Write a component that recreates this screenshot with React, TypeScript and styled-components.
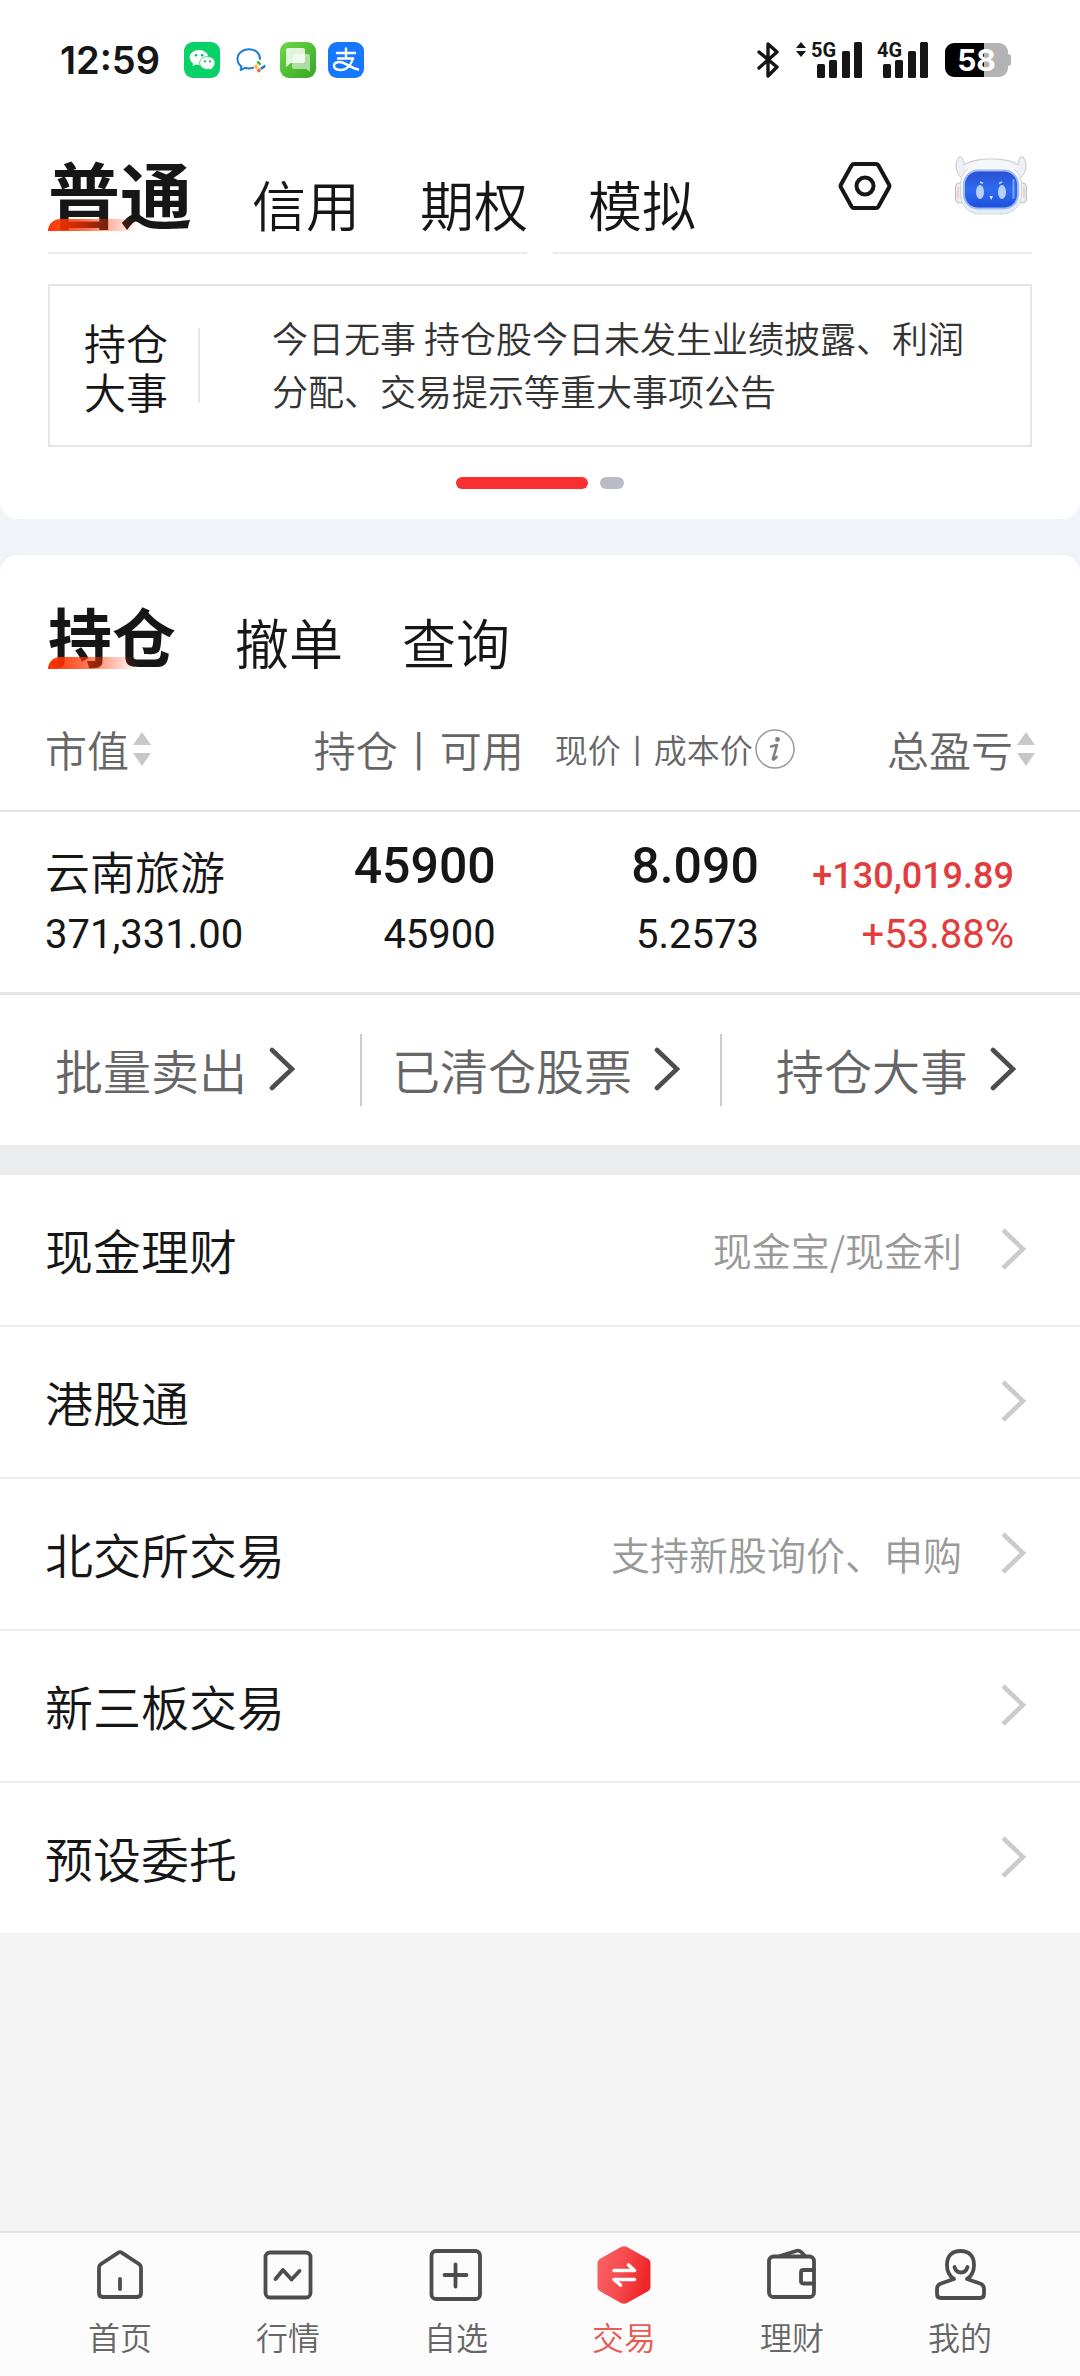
import React from "react";
import styled, { createGlobalStyle, css } from "styled-components";

const GlobalStyle = createGlobalStyle`
  *, *::before, *::after { box-sizing: border-box; }
  html, body { margin: 0; padding: 0; }
  body {
    background: #f4f4f4;
    color: #161616;
    font-family: "Noto Sans CJK SC", "Noto Sans", sans-serif;
    font-weight: 350;
  }
  button {
    margin: 0;
    padding: 0;
    border: 0;
    background: none;
    color: inherit;
    font: inherit;
    cursor: pointer;
  }
  a { color: inherit; text-decoration: none; }
  svg { display: block; flex: none; }
`;

const Page = styled.div`
  display: flex;
  flex-direction: column;
  min-height: 100vh;
`;

/* ---------- status bar ---------- */

const StatusBar = styled.div`
  display: flex;
  align-items: center;
  justify-content: space-between;
  height: 120px;
  padding: 0 72px 0 60px;
`;

const StatusGroup = styled.div<{ $gap: number }>`
  display: flex;
  align-items: center;
  gap: ${(p) => p.$gap}px;
`;

const Clock = styled.time`
  margin-right: 12px;
  font: 600 38px/36px Inter, sans-serif;
`;

const Battery = styled.div`
  position: relative;
  width: 63px;
  height: 34px;
  border-radius: 9px;
  background: linear-gradient(90deg, #000 62%, #b3b3b3 62%);
  color: #fff;
  font: 700 30px/34px Inter, sans-serif;
  text-align: center;

  &::after {
    content: "";
    position: absolute;
    top: 11px;
    right: -3px;
    width: 3px;
    height: 12px;
    border-radius: 0 3px 3px 0;
    background: #b3b3b3;
  }
`;

/* ---------- cards and tabs ---------- */

const Backdrop = styled.main`
  display: flex;
  flex-direction: column;
  gap: 36px;
  background: #f2f3f8;
`;

const TopCard = styled.section`
  padding-bottom: 30px;
  border-radius: 0 0 18px 18px;
  background: #fff;
`;

const HoldingsCard = styled.section`
  border-radius: 18px 18px 0 0;
  background: #fff;
`;

const TabBar = styled.div`
  display: flex;
  align-items: flex-end;
  padding: 0 48px;
`;

const AccountBar = styled(TabBar)`
  gap: 60px;
  height: 111px;
`;

const SectionBar = styled(TabBar)`
  gap: 59px;
  height: 114px;
`;

const Tab = styled.button<{ $size?: number }>`
  position: relative;
  font-size: 54px;
  line-height: 54px;
  white-space: nowrap;

  ${(p) =>
    p.$size &&
    css`
      font-size: ${p.$size}px;
      line-height: ${p.$size + 6}px;
      font-weight: 700;

      &::after {
        content: "";
        position: absolute;
        left: 0;
        bottom: 0;
        width: 90px;
        height: 12px;
        border-radius: 12px 0 0 0;
        background: linear-gradient(90deg, #ff3300, rgba(255, 51, 0, 0.7) 40%, rgba(255, 51, 0, 0));
      }
    `}
`;

const HeaderActions = styled.div`
  display: flex;
  align-items: center;
  gap: 62px;
  height: 111px;
  padding: 20px 4px 0 0;
  margin-left: auto;
`;

const TabRule = styled.div`
  display: grid;
  grid-template-columns: 1fr 1fr;
  gap: 26px;
  height: 2px;
  margin: 21px 48px 30px;

  i { background: #ebebeb; }
`;

/* ---------- notice ---------- */

const Notice = styled.article`
  display: flex;
  align-items: center;
  height: 163px;
  margin: 0 48px;
  padding: 0 40px 0 34px;
  border: 2px solid #e5e6e8;
`;

const NoticeTitle = styled.h2`
  width: 84px;
  margin: 0;
  font-size: 42px;
  font-weight: inherit;
  line-height: 49px;
`;

const NoticeRule = styled.div`
  flex: none;
  width: 2px;
  height: 75px;
  margin: 0 72px 0 30px;
  background: #e5e6e8;
`;

const NoticeText = styled.p`
  flex: 1;
  margin: 0;
  padding-bottom: 4px;
  color: #333;
  font-size: 36px;
  line-height: 53px;
`;

const Pager = styled.div`
  display: flex;
  justify-content: center;
  gap: 12px;
  margin-top: 30px;
`;

const PagerDot = styled.span<{ $active?: boolean }>`
  width: ${(p) => (p.$active ? 132 : 24)}px;
  height: 12px;
  border-radius: 6px;
  background: ${(p) => (p.$active ? "#f83030" : "#bbbbc6")};
`;

/* ---------- holdings table ---------- */

const Holdings = styled.table`
  width: 100%;
  border-collapse: collapse;
  table-layout: fixed;
  text-align: right;

  th:first-child, td:first-child { padding-left: 45px; text-align: left; }
  th:last-child { padding-right: 45px; }
`;

const Col = styled.col<{ $width: string }>`
  width: ${(p) => p.$width};
`;

const HeadCell = styled.th<{ $small?: boolean }>`
  height: 142px;
  padding: 18px 0 0;
  border-bottom: 2px solid #e3e4e8;
  color: #666;
  font-size: ${(p) => (p.$small ? 33 : 42)}px;
  font-weight: inherit;
  white-space: nowrap;
`;

const HeadLabel = styled.span`
  display: inline-flex;
  align-items: center;
  gap: 2px;
`;

const SortButton = styled.button`
  display: inline-flex;
  align-items: center;
  gap: 4px;
`;

const BodyCell = styled.td<{ $inset?: number }>`
  height: 182px;
  padding: 0 ${(p) => p.$inset ?? 0}px 27px 0;
  border-bottom: 3px solid #e3e4e8;
  vertical-align: bottom;
`;

const figureKinds = {
  name: css`
    font-size: 45px;
    line-height: 68px;
  `,
  large: css`
    font-family: Roboto, sans-serif;
    font-size: 50px;
    font-weight: 500;
    line-height: 78px;
  `,
  gain: css`
    font-family: Roboto, sans-serif;
    font-size: 36px;
    font-weight: 500;
    line-height: 58px;
  `,
  small: css`
    font-family: Roboto, sans-serif;
    font-size: 40px;
    font-weight: 400;
    line-height: 60px;
  `,
};

const Figure = styled.div<{ $kind: keyof typeof figureKinds; $red?: boolean }>`
  color: ${(p) => (p.$red ? "#e23c3c" : "inherit")};
  white-space: nowrap;
  ${(p) => figureKinds[p.$kind]}
`;

/* ---------- shortcuts ---------- */

const Shortcuts = styled.nav`
  display: grid;
  grid-template-columns: repeat(3, 1fr);
  height: 150px;
  align-items: center;
`;

const Shortcut = styled.a`
  display: flex;
  align-items: center;
  justify-content: center;
  gap: 22px;
  height: 72px;
  padding: 0 10px 2px 0;
  color: #666;
  font-size: 48px;
  white-space: nowrap;

  & + & { border-left: 2px solid #ccc; }
`;

/* ---------- service list ---------- */

const Services = styled.ul`
  margin: 0;
  padding: 30px 0 0;
  background: #ebecee;
  list-style: none;
`;

const ServiceItem = styled.li`
  background: #fff;

  & + & { border-top: 2px solid #ebecee; }
`;

const Service = styled.a`
  display: flex;
  align-items: center;
  height: 150px;
  padding: 0 54px 2px 45px;
  font-size: 48px;
`;

const Hint = styled.span`
  margin: 0 38px 0 auto;
  color: #999;
  font-size: 39px;
`;

/* ---------- bottom navigation ---------- */

const BottomNav = styled.nav`
  display: grid;
  grid-template-columns: repeat(6, 1fr);
  height: 145px;
  margin-top: auto;
  padding: 12px 36px 0;
  border-top: 2px solid #e4e4e6;
  background: #fcfcfd;
`;

const NavItem = styled.a<{ $active?: boolean }>`
  display: flex;
  flex-direction: column;
  align-items: center;
  gap: 11px;
  color: ${(p) => (p.$active ? "#e9594f" : "#666")};
  font-size: 32px;
  line-height: 40px;
`;

/* ---------- icons ---------- */

const WeChatIcon = () => (
  <svg width="36" height="36" viewBox="0 0 36 36">
    <rect width="36" height="36" rx="9" fill="#07d167" />
    <path d="M15 8c-5.200 0-9.300 3.300-9.300 7.500 0 2.400 1.300 4.500 3.400 5.900L8.400 24l3.200-1.600c1 .3 2.200.5 3.400.5 5.200 0 9.300-3.300 9.300-7.400S20.200 8 15 8z" fill="#fff" />
    <path d="M23.400 14.600c-4.300 0-7.700 2.800-7.700 6.400s3.400 6.400 7.700 6.400c1 0 1.900-.1 2.700-.4l2.700 1.300-.7-2.200c1.800-1.200 2.900-3 2.900-5.100 0-3.600-3.400-6.400-7.600-6.400z" fill="#fff" stroke="#07d167" strokeWidth=".8" />
    <g fill="#07c160">
      <circle cx="12" cy="13.200" r="1.300" /><circle cx="18.200" cy="13.200" r="1.300" />
      <circle cx="21" cy="19.400" r="1.100" /><circle cx="26" cy="19.400" r="1.100" />
    </g>
  </svg>
);

const WeComIcon = () => (
  <svg width="36" height="36" viewBox="0 0 36 36" fill="none">
    <path d="M28 17c0-6-5-9.800-11.200-9.800S5.500 11.600 5.500 17c0 3 1.500 5.600 3.900 7.400L8.600 28l4.400-2.200c2.500.8 5.500.8 8 0" stroke="#1f7fd0" strokeWidth="2" strokeLinecap="round" strokeLinejoin="round" />
    <path d="M26 18.500l3.500 3.500-2 1.500-3-3z" fill="#3fae3a" />
    <path d="M33 22.500l.5 2.500-4 3-1.500-2z" fill="#1b6fd0" />
    <path d="M29 29l-2.500 1.500-2-2 2.500-2.500z" fill="#f2622b" />
    <path d="M24.500 22l-2.500 2.500 2 3 2-2z" fill="#fbbc1c" />
  </svg>
);

const MessagesIcon = () => (
  <svg width="36" height="36" viewBox="0 0 36 36">
    <defs>
      <linearGradient id="msg" x1="0" y1="0" x2="1" y2="1">
        <stop offset="0" stopColor="#6fd844" /><stop offset="1" stopColor="#35a626" />
      </linearGradient>
    </defs>
    <rect width="36" height="36" rx="9" fill="url(#msg)" />
    <path d="M13 12h15a2 2 0 012 2v16l-4-3H14a2 2 0 01-2-2z" fill="#fff" opacity=".55" />
    <path d="M8 6h15a2 2 0 012 2v11a2 2 0 01-2 2H11l-5 4V8a2 2 0 012-2z" fill="#fff" opacity=".82" />
  </svg>
);

const AlipayIcon = () => (
  <svg width="36" height="36" viewBox="0 0 36 36" fill="none">
    <rect width="36" height="36" rx="9" fill="#1677ff" />
    <g stroke="#fff" strokeWidth="2.400" strokeLinecap="round">
      <path d="M9 11h18M18 6.500v10M10 16.500h15" />
      <path d="M25 16.500c-1.500 5-5.500 11.500-12.500 11.500-4 0-6.500-1.600-6.500-4.200S8.300 20 11.500 20c5.500 0 10 5.500 18.500 7.500" />
    </g>
  </svg>
);

const BluetoothIcon = () => (
  <svg width="22" height="36" viewBox="0 0 22 36" fill="none" stroke="#161616" strokeWidth="3.400" strokeLinecap="round" strokeLinejoin="round">
    <path d="M2 10l18 15-9 9V2l9 8L2 26" />
  </svg>
);

const SignalIcon = ({ label, arrows }: { label: string; arrows?: boolean }) => (
  <svg width={arrows ? 68 : 52} height="48" viewBox={arrows ? "-16 -6 68 48" : "0 -6 52 48"} fill="#161616">
    {arrows && <path d="M-15 6l5-6 5 6zM-15 9l5 6 5-6z" />}
    <text x="0" y="15" fontFamily="Roboto, sans-serif" fontWeight="700" fontSize="20">{label}</text>
    <rect x="6" y="22" width="8" height="14" rx="1.500" />
    <rect x="18" y="18" width="8" height="18" rx="1.500" />
    <rect x="31" y="9" width="8" height="27" rx="1.500" />
    <rect x="43" y="0" width="8" height="36" rx="1.500" />
  </svg>
);

const SettingsIcon = () => (
  <svg width="54" height="50" viewBox="0 0 54 50" fill="none" stroke="#161616" strokeWidth="4" strokeLinejoin="round">
    <path d="M16 3h22q1.500 0 2.300 1.300L51 23.500q.8 1.500 0 3L40.300 45.700Q39.500 47 38 47H16q-1.500 0-2.300-1.300L3 26.500q-.8-1.500 0-3L13.700 4.300Q14.500 3 16 3z" />
    <circle cx="27" cy="25" r="8.500" />
  </svg>
);

const RobotIcon = () => (
  <svg width="74" height="60" viewBox="0 0 74 60" fill="none">
    <defs>
      <linearGradient id="screen" x1="0" y1="0" x2="0" y2="1">
        <stop offset="0" stopColor="#2a4fd0" /><stop offset=".5" stopColor="#2f6bf0" /><stop offset="1" stopColor="#1c4fdc" />
      </linearGradient>
      <linearGradient id="shell" x1="0" y1="0" x2="0" y2="1">
        <stop offset="0" stopColor="#fbfcfd" /><stop offset="1" stopColor="#e4ebf5" />
      </linearGradient>
    </defs>
    <rect x="1.500" y="27" width="9" height="20" rx="4" fill="#f0ebee" stroke="#b9bcc4" />
    <rect x="63.500" y="27" width="9" height="20" rx="4" fill="#f0ebee" stroke="#b9bcc4" />
    <path d="M4 31v11M70 31v11" stroke="#e4b5b0" />
    <path d="M8 22C0 16 1 6 5 1c4-1 4 4 5 8 8-8 46-8 54 0 1-4 1-9 5-8 4 5 5 15-3 21z" fill="#edf0f5" stroke="#c3c7cf" />
    <rect x="6.500" y="9" width="61" height="49" rx="19" fill="url(#shell)" stroke="#d3d7df" />
    <path d="M12 10q25-13 50 0l-3 5H15z" fill="#f5f7f9" />
    <rect x="10" y="14.500" width="54" height="38" rx="14" fill="url(#screen)" stroke="#9fb9f5" strokeWidth="2" />
    <ellipse cx="26" cy="36" rx="4" ry="7" fill="#b4d0fb" />
    <ellipse cx="48" cy="36" rx="4" ry="7" fill="#b4d0fb" />
    <path d="M26 26l3 1.500M48 26l-3 1.500" stroke="#c4dcff" strokeWidth="1.500" />
    <path d="M35.500 40h3.500l-1.800 4z" fill="#e4f0ff" />
    <path d="M59.500 24v18" stroke="#7aa2f8" strokeWidth="2" strokeLinecap="round" />
  </svg>
);

const SortIcon = () => (
  <svg width="18" height="34" viewBox="0 0 18 34" fill="#c8c8c8">
    <path d="M9 0l9 13H0zM0 21h18L9 34z" />
  </svg>
);

const InfoIcon = () => (
  <svg width="40" height="40" viewBox="0 0 40 40" fill="none">
    <circle cx="20" cy="20" r="19" stroke="#999" strokeWidth="1.500" />
    <circle cx="22.500" cy="10.500" r="2.400" fill="#808080" />
    <path d="M16 17.500l6-1.500-4 13.500q-.3 1.500 1 .8l2.500-2.300" stroke="#808080" strokeWidth="2.600" strokeLinejoin="round" strokeLinecap="round" />
  </svg>
);

const Chevron = ({ color, cap }: { color: string; cap: "round" | "butt" }) => (
  <svg width="26" height="44" viewBox="0 0 26 44" fill="none" stroke={color} strokeWidth="4.600" strokeLinecap={cap}>
    <path d="M3 3l20 19L3 41" />
  </svg>
);

const NavIcon = ({ children }: { children: React.ReactNode }) => (
  <svg width="60" height="60" viewBox="0 0 60 60" fill="none" stroke="#4d4d4d" strokeWidth="3.800" strokeLinecap="round" strokeLinejoin="round">
    {children}
  </svg>
);

const HomeIcon = () => (
  <NavIcon>
    <path d="M28 7.800q2-1.400 4 0L49 19q2 1.500 2 4v25q0 4-4 4H13q-4 0-4-4V23q0-2.500 2-4z" />
    <path d="M30 34v10" />
  </NavIcon>
);

const MarketIcon = () => (
  <NavIcon>
    <rect x="7.500" y="7.500" width="45" height="45" rx="4.500" />
    <path d="M17.500 34l7.500-9 8.500 9.500 8-8.500" />
  </NavIcon>
);

const WatchIcon = () => (
  <NavIcon>
    <rect x="5.500" y="6" width="48.500" height="48" rx="4.500" />
    <path d="M18.500 30h22M29.500 19.500v22" />
  </NavIcon>
);

const TradeIcon = () => (
  <svg width="60" height="60" viewBox="0 0 60 60" fill="none">
    <defs>
      <linearGradient id="trade" x1="0" y1="0" x2="1" y2=".25">
        <stop offset="0" stopColor="#fb6266" /><stop offset=".5" stopColor="#f64d50" /><stop offset="1" stopColor="#ee2529" />
      </linearGradient>
    </defs>
    <path d="M27 2q3-1.600 6 0l20.500 11.500q3 1.700 3 5v23q0 3.300-3 5L33 58q-3 1.600-6 0L6.500 46.500q-3-1.700-3-5v-23q0-3.300 3-5z" fill="url(#trade)" />
    <path d="M20 25.500h20.500L34.500 20M40.500 34.500H20l6.500 5.500" stroke="#fff" strokeWidth="3.600" strokeLinecap="round" strokeLinejoin="round" />
  </svg>
);

const WalletIcon = () => (
  <NavIcon>
    <rect x="7" y="11.500" width="45" height="40.500" rx="4.500" />
    <path d="M52 25H41.500q-2.500 0-2.500 2.500v8.500q0 2.500 2.500 2.500H52" />
    <path d="M18 11l16-5q3-1 5 .8L43 11" />
  </NavIcon>
);

const ProfileIcon = () => (
  <NavIcon>
    <path d="M24 34C19 31 17 26 17 20 17 10 23 6 30.500 6S44 10 44 20c0 6-2 11-7 14l13 4.500q4 1.500 4 5.500v5q0 4-4 4H11q-4 0-4-4v-5q0-4 4-5.500z" />
    <path d="M24.500 22q1.500 5.500 6.500 5.500t6.500-5.500" />
  </NavIcon>
);

/* ---------- data ---------- */

const services = [
  { name: "现金理财", hint: "现金宝/现金利" },
  { name: "港股通" },
  { name: "北交所交易", hint: "支持新股询价、申购" },
  { name: "新三板交易" },
  { name: "预设委托" },
];

const navItems = [
  { name: "首页", Icon: HomeIcon },
  { name: "行情", Icon: MarketIcon },
  { name: "自选", Icon: WatchIcon },
  { name: "交易", Icon: TradeIcon, active: true },
  { name: "理财", Icon: WalletIcon },
  { name: "我的", Icon: ProfileIcon },
];

export default function App() {
  return (
    <Page>
      <GlobalStyle />
      <Backdrop>
        <TopCard>
          <StatusBar>
            <StatusGroup $gap={12}>
              <Clock>12:59</Clock>
              <WeChatIcon />
              <WeComIcon />
              <MessagesIcon />
              <AlipayIcon />
            </StatusGroup>
            <StatusGroup $gap={16}>
              <BluetoothIcon />
              <StatusGroup $gap={14}>
                <SignalIcon label="5G" arrows />
                <SignalIcon label="4G" />
              </StatusGroup>
              <Battery>58</Battery>
            </StatusGroup>
          </StatusBar>

          <AccountBar role="tablist">
            <Tab role="tab" aria-selected $size={72}>普通</Tab>
            <Tab role="tab">信用</Tab>
            <Tab role="tab">期权</Tab>
            <Tab role="tab">模拟</Tab>
            <HeaderActions>
              <button aria-label="设置"><SettingsIcon /></button>
              <button aria-label="客服"><RobotIcon /></button>
            </HeaderActions>
          </AccountBar>
          <TabRule><i /><i /></TabRule>

          <Notice>
            <NoticeTitle>持仓大事</NoticeTitle>
            <NoticeRule />
            <NoticeText>今日无事 持仓股今日未发生业绩披露、利润分配、交易提示等重大事项公告</NoticeText>
          </Notice>
          <Pager>
            <PagerDot $active />
            <PagerDot />
          </Pager>
        </TopCard>

        <HoldingsCard>
          <SectionBar role="tablist">
            <Tab role="tab" aria-selected $size={64}>持仓</Tab>
            <Tab role="tab">撤单</Tab>
            <Tab role="tab">查询</Tab>
          </SectionBar>

          <Holdings>
            <colgroup>
              <Col $width="27.8%" />
              <Col $width="20.7%" />
              <Col $width="25.1%" />
              <Col $width="26.4%" />
            </colgroup>
            <thead>
              <tr>
                <HeadCell><SortButton>市值<SortIcon /></SortButton></HeadCell>
                <HeadCell>持仓丨可用</HeadCell>
                <HeadCell $small><HeadLabel>现价丨成本价<InfoIcon /></HeadLabel></HeadCell>
                <HeadCell><SortButton>总盈亏<SortIcon /></SortButton></HeadCell>
              </tr>
            </thead>
            <tbody>
              <tr>
                <BodyCell>
                  <Figure $kind="name">云南旅游</Figure>
                  <Figure $kind="small">371,331.00</Figure>
                </BodyCell>
                <BodyCell $inset={28}>
                  <Figure $kind="large">45900</Figure>
                  <Figure $kind="small">45900</Figure>
                </BodyCell>
                <BodyCell $inset={36}>
                  <Figure $kind="large">8.090</Figure>
                  <Figure $kind="small">5.2573</Figure>
                </BodyCell>
                <BodyCell $inset={66}>
                  <Figure $kind="gain" $red>+130,019.89</Figure>
                  <Figure $kind="small" $red>+53.88%</Figure>
                </BodyCell>
              </tr>
            </tbody>
          </Holdings>

          <Shortcuts>
            {["批量卖出", "已清仓股票", "持仓大事"].map((name) => (
              <Shortcut href="#" key={name}>
                {name}
                <Chevron color="#4d4d4d" cap="round" />
              </Shortcut>
            ))}
          </Shortcuts>
        </HoldingsCard>
      </Backdrop>

      <Services>
        {services.map(({ name, hint }) => (
          <ServiceItem key={name}>
            <Service href="#">
              {name}
              <Hint>{hint}</Hint>
              <Chevron color="#ccc" cap="butt" />
            </Service>
          </ServiceItem>
        ))}
      </Services>

      <BottomNav>
        {navItems.map(({ name, Icon, active }) => (
          <NavItem href="#" key={name} $active={active}>
            <Icon />
            {name}
          </NavItem>
        ))}
      </BottomNav>
    </Page>
  );
}
